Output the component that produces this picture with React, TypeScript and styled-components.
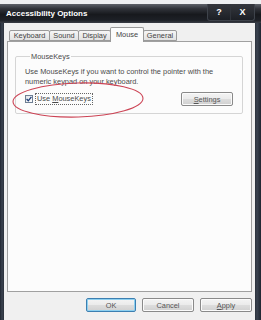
import React from "react";
import styled, { createGlobalStyle } from "styled-components";

const GlobalStyle = createGlobalStyle`
  html, body { margin: 0; padding: 0; background: #eceef0; }
  #root { width: 261px; height: 320px; overflow: hidden; }
  * { box-sizing: border-box; }
`;

const Screen = styled.div`
  position: relative;
  width: 261px;
  height: 320px;
  padding-top: 4px;
  display: flex;
  flex-direction: column;
  background: #eef0f2;
  font-family: "Liberation Sans", Arial, sans-serif;
  color: #3a3a3a;
`;

const TitleBar = styled.div`
  height: 19px;
  display: flex;
  align-items: center;
  padding-left: 6px;
  background: linear-gradient(#5e626a 0%, #30333a 25%, #17191d 55%, #1d2026 85%, #3a3e46 100%);
`;

const Title = styled.div`
  flex: 1;
  color: #fff;
  font-weight: bold;
  font-size: 8px;
`;

const CaptionButtons = styled.div`
  display: flex;
  height: 17px;
  margin-right: 6px;
  align-self: flex-start;
  border: 1px solid #3e434b;
  border-top: none;
  border-radius: 0 0 3px 3px;
  background: linear-gradient(#34373e, #1c1f25);
`;

const CaptionButton = styled.div<{ $w: number }>`
  width: ${(p) => p.$w}px;
  display: flex;
  align-items: center;
  justify-content: center;
  color: #fff;
  font-weight: bold;
  font-size: 9px;
  & + & { border-left: 1px solid #30343b; }
`;

const Frame = styled.div`
  flex: 1;
  display: flex;
  padding: 0 6px 0 4px;
  background: linear-gradient(90deg, #1f2530 0px, #3b4350 2px, #2a303a 4px, #2a303a 255px, #3b4350 257px, #1f2530 261px);
`;

const Body = styled.div`
  flex: 1;
  display: flex;
  flex-direction: column;
  background: #f0f0f0;
  padding: 4px 3px 8px 3px;
`;

const TabRow = styled.div`
  height: 14px;
  display: flex;
  align-items: flex-end;
  padding-left: 2px;
  position: relative;
  z-index: 1;
`;

const Tab = styled.div<{ $w: number; $active?: boolean }>`
  width: ${(p) => p.$w}px;
  height: ${(p) => (p.$active ? 15 : 11)}px;
  margin-bottom: ${(p) => (p.$active ? -1 : 0)}px;
  margin-left: -1px;
  display: flex;
  align-items: ${(p) => (p.$active ? "flex-start" : "center")};
  padding-top: ${(p) => (p.$active ? 2 : 0)}px;
  justify-content: center;
  font-size: 7.4px;
  color: #444;
  border: 1px solid #9a9a9a;
  border-bottom: ${(p) => (p.$active ? "none" : "1px solid #9a9a9a")};
  border-radius: 2px 2px 0 0;
  background: ${(p) => (p.$active ? "#fcfcfc" : "linear-gradient(#f6f6f6, #e2e2e2)")};
  z-index: ${(p) => (p.$active ? 2 : 1)};
  &:first-child { margin-left: 0; }
`;

const Panel = styled.div`
  flex: 1;
  background: #fcfcfc;
  border: 1px solid #a0a0a0;
  padding: 10px 8px 0 7px;
`;

const Group = styled.fieldset`
  margin: 0;
  padding: 0 9px 7px 9px;
  border: 1px solid #d5d5d5;
  border-radius: 2px;
`;

const Legend = styled.legend`
  font-size: 7.4px;
  line-height: 9px;
  color: #4a4a4a;
  padding: 0 1px;
  margin-left: 5px;
`;

const Description = styled.p`
  margin: 6px 0 0 0;
  font-size: 7.4px;
  line-height: 10px;
  color: #4a4a4a;
`;

const OptionRow = styled.div`
  margin-top: 5px;
  display: flex;
  align-items: center;
  justify-content: space-between;
  height: 14px;
`;

const CheckLabel = styled.label`
  display: flex;
  align-items: center;
  gap: 2px;
  font-size: 7.4px;
  color: #4a4a4a;
`;

const CheckBox = styled.span`
  width: 8px;
  height: 8px;
  border: 1px solid #6f7f93;
  background: linear-gradient(135deg, #e0e4ea, #ffffff);
  display: flex;
  align-items: center;
  justify-content: center;
`;

const FocusText = styled.span`
  border: 1px dotted #666;
  padding: 1px 1px;
  line-height: 8px;
`;

const Key = styled.span`
  text-decoration: underline;
`;

const Button = styled.button<{ $default?: boolean }>`
  width: ${(p) => (p.$default ? 50 : 52)}px;
  height: 14px;
  padding: 0;
  font-family: "Liberation Sans", Arial, sans-serif;
  font-size: 7.4px;
  color: #555;
  border: 1px solid ${(p) => (p.$default ? "#3c7fb1" : "#8a8a8a")};
  border-radius: 2px;
  background: linear-gradient(#f4f4f4 0%, #ebebeb 50%, #dddddd 51%, #d0d0d0 100%);
  box-shadow: inset 0 0 0 1px ${(p) => (p.$default ? "#8ed0f0" : "#fbfbfb")};
`;

const ButtonRow = styled.div`
  margin-top: 6px;
  height: 14px;
  display: flex;
  justify-content: flex-end;
  gap: 6px;
`;

const Annotation = styled.svg`
  position: absolute;
  left: 0;
  top: 0;
  pointer-events: none;
`;

export default function App() {
  return (
    <>
      <GlobalStyle />
      <Screen>
        <TitleBar>
          <Title>Accessibility Options</Title>
          <CaptionButtons>
            <CaptionButton $w={22}>?</CaptionButton>
            <CaptionButton $w={24}>X</CaptionButton>
          </CaptionButtons>
        </TitleBar>
        <Frame>
          <Body>
            <TabRow>
              <Tab $w={41}>Keyboard</Tab>
              <Tab $w={30}>Sound</Tab>
              <Tab $w={33}>Display</Tab>
              <Tab $w={34} $active>Mouse</Tab>
              <Tab $w={34}>General</Tab>
            </TabRow>
            <Panel>
              <Group>
                <Legend>MouseKeys</Legend>
                <Description>
                  Use MouseKeys if you want to control the pointer with the
                  <br />
                  numeric keypad on your keyboard.
                </Description>
                <OptionRow>
                  <CheckLabel>
                    <CheckBox>
                      <svg width="6" height="6" viewBox="0 0 6 6">
                        <path d="M0.6 3 L2.3 4.8 L5.4 0.8" fill="none" stroke="#1f3f7a" strokeWidth="1.3" />
                      </svg>
                    </CheckBox>
                    <FocusText>
                      Use <Key>M</Key>ouseKeys
                    </FocusText>
                  </CheckLabel>
                  <Button>
                    <Key>S</Key>ettings
                  </Button>
                </OptionRow>
              </Group>
            </Panel>
            <ButtonRow>
              <Button $default>OK</Button>
              <Button>Cancel</Button>
              <Button>
                <Key>A</Key>pply
              </Button>
            </ButtonRow>
          </Body>
        </Frame>
        <Annotation width="261" height="320">
          <ellipse cx="78" cy="100" rx="65" ry="17" fill="none" stroke="#cc4455" strokeWidth="1.1" transform="rotate(-1.5 78 100)" />
        </Annotation>
      </Screen>
    </>
  );
}
